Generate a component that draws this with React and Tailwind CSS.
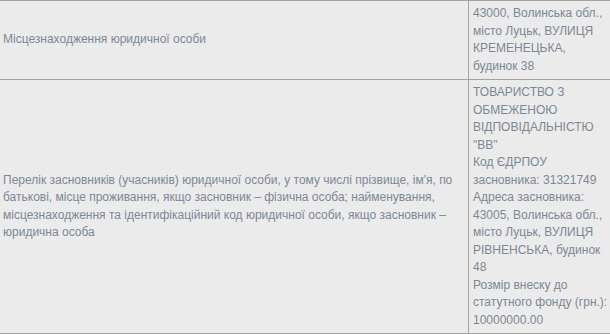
import React from "react";

const rows = [
  {
    label: "Місцезнаходження юридичної особи",
    value: ["43000, Волинська обл., місто Луцьк, ВУЛИЦЯ КРЕМЕНЕЦЬКА, будинок 38"],
  },
  {
    label:
      "Перелік засновників (учасників) юридичної особи, у тому числі прізвище, ім'я, по батькові, місце проживання, якщо засновник – фізична особа; найменування, місцезнаходження та ідентифікаційний код юридичної особи, якщо засновник – юридична особа",
    value: [
      'ТОВАРИСТВО З ОБМЕЖЕНОЮ ВІДПОВІДАЛЬНІСТЮ "ВВ"',
      "Код ЄДРПОУ засновника: 31321749",
      "Адреса засновника: 43005, Волинська обл., місто Луцьк, ВУЛИЦЯ РІВНЕНСЬКА, будинок 48",
      "Розмір внеску до статутного фонду (грн.): 10000000.00",
    ],
  },
];

export default function App() {
  return (
    <div className="h-[334px] w-[610px] overflow-hidden bg-[#ebebeb] font-['Liberation_Sans',Arial,sans-serif] text-[12px] leading-[17.5px] text-[#7c8896]">
      <div className="w-[640px] border-t border-[#a3a3a3]">
        {rows.map((row, i) => (
          <div key={i} className="grid grid-cols-[468px_172px] border-b border-[#a3a3a3]">
            <div className="flex items-center px-[3px] py-1">{row.label}</div>
            <div className="border-l border-[#a3a3a3] py-1 pl-1 pr-[30px]">
              {row.value.map((line, j) => (
                <div key={j}>{line}</div>
              ))}
            </div>
          </div>
        ))}
      </div>
    </div>
  );
}
